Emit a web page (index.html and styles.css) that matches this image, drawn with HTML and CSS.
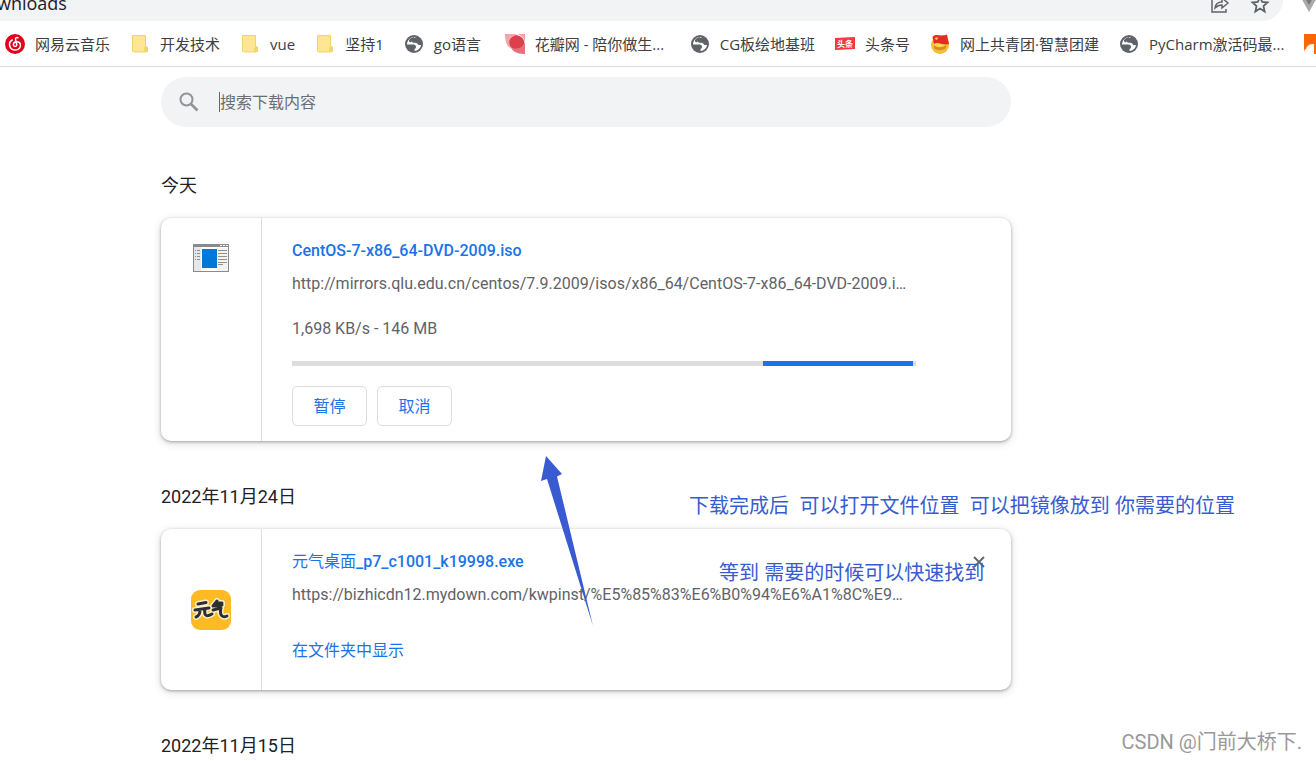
FILE: index.html
```html
<!DOCTYPE html>
<html lang="zh-CN">
<head>
<meta charset="utf-8">
<title>下载内容</title>
<link rel="stylesheet" href="styles.css">
</head>
<body>
<svg class="defs" aria-hidden="true">
  <symbol id="folder" viewBox="0 0 20 20"><path d="M2 1.500h14v11l1.500 1v4.500H3.500L2 17z" fill="#ffe594"/><path d="M2.500 1.500h13V12l2 1v4l-1 1h-13l-1-1z" fill="none" stroke="#f3d46a"/><path d="M14 13.500l1.500-1 2 1V17l-1 1h-2z" fill="#f3d46a"/></symbol>
  <symbol id="globe" viewBox="0 0 20 20"><circle cx="10" cy="10" r="9" fill="#5f6368"/><path d="M13 3.500C9.500 3.500 6.500 5 7.500 7.500c.6 1.500 3 1 5 1.500 1 .3 1.300 1.800 2.300 2H17c-.3 3-3 5.800-6.500 6v-1.500c0-.8 1.500-1 1.500-2.500 0-2-1.500-2.500-3.500-2.500H3C3 6.500 6.500 3 10 3z" fill="#fff"/><path d="M5 6c1-1.500 3-2.700 5-3 .5 1.800-2.500 2-2.500 4.500 0 1.500-3 1-2.500-1.500z" fill="#5f6368"/></symbol>
</svg>
<header class="toolbar">
  <div class="omnibox">
    <span class="address">wnloads</span>
    <div class="tools">
      <button type="button" aria-label="分享"><svg width="20" height="14" viewBox="0 0 20 14"><path d="M2 0v12h14V9M5 8c.5-4 3-6 7-6V-2l6 5-6 5V5C9 5 7 6 5 8z" fill="none" stroke="#5f6368" stroke-width="1.500"/></svg></button>
      <button type="button" aria-label="收藏"><svg width="20" height="14" viewBox="0 0 20 14"><path d="M10-5l2.200 5 5.300.5-4 3.600 1.200 5.400-4.700-2.900-4.700 2.900 1.200-5.400-4-3.600 5.300-.5z" transform="translate(0 2)" fill="none" stroke="#5f6368" stroke-width="1.800"/></svg></button>
    </div>
  </div>
  <svg class="extension" width="16" height="14" viewBox="0 0 16 14"><path d="M0-4h18L9 12z" fill="#aaa"/><path d="M4-4h10L9 5z" fill="#777"/></svg>
</header>
<nav class="bookmarks">
  <a href="#"><svg viewBox="0 0 20 20"><circle cx="10" cy="10" r="10" fill="#e2001a"/><path d="M13 3.800c-1.800-.7-2.800.3-2.400 1.800l1.100 4.800c.5 2.600-3.300 2.800-3.300.2 0-3.300 5.800-4 6.900-.6 1 3.200-1.500 6-5 6-6 0-7.800-7.500-3-10" fill="none" stroke="#fff" stroke-width="1.500" stroke-linecap="round"/></svg><span>网易云音乐</span></a>
  <a href="#"><svg><use href="#folder"/></svg><span>开发技术</span></a>
  <a href="#"><svg><use href="#folder"/></svg><span>vue</span></a>
  <a href="#"><svg><use href="#folder"/></svg><span>坚持1</span></a>
  <a href="#"><svg><use href="#globe"/></svg><span class="label-go">go语言</span></a>
  <a href="#"><svg viewBox="0 0 20 20"><path d="M0 0h12C4 3 3 10 7 15 2 13 0 8 0 0z" fill="#f2a5ab"/><path d="M12 0h8v9C19 3 16 1 12 0z" fill="#f0a0a6"/><path d="M20 8v12C11 20 5 17 5 8c5 9 12 8 15 0z" fill="#e8707b"/><path d="M11 1c6 1 9 5 8 9-2 5-8 6-13 3C2 8 5 3 11 1z" fill="#dd3f4c"/></svg><span class="label-long">花瓣网 - 陪你做生...</span></a>
  <a href="#"><svg><use href="#globe"/></svg><span>CG板绘地基班</span></a>
  <a href="#"><svg viewBox="0 0 20 20"><path d="M0 4l20-1v12L0 16z" fill="#f5373f"/><text x="10" y="13" class="badge-text">头条</text></svg><span>头条号</span></a>
  <a href="#"><svg viewBox="0 0 20 20"><circle cx="10" cy="11" r="9" fill="#f3bd35"/><circle cx="9.500" cy="10" r="6" fill="#f8d94c"/><path d="M2.500 3C6-1 10 3 17 .5L19 10C12 12 8 7 4 10z" fill="#e52b25"/><path d="M4.500 4l3-1 .5 2-2 1z" fill="#f9c62e"/><path d="M4 11c3 3 8 3 12 0v3c-4 3-9 3-12 0z" fill="#d98a22"/></svg><span>网上共青团·智慧团建</span></a>
  <a href="#"><svg><use href="#globe"/></svg><span class="label-long">PyCharm激活码最...</span></a>
  <a href="#" aria-label="书签"><svg viewBox="0 0 20 20"><path d="M0 0h20v20H0z" fill="#f60"/><path d="M0 20c0-3 0-4 2-5 1-4 4-5 8-5v10z" fill="#fff"/></svg></a>
</nav>
<main class="downloads">
  <label class="search">
    <svg width="20" height="20" viewBox="0 0 20 20"><circle cx="7.500" cy="7.500" r="6" fill="none" stroke="#909397" stroke-width="2"/><path d="M12 12l6.500 6.500" stroke="#909397" stroke-width="2.600"/></svg>
    <input type="text" aria-label="搜索下载内容" placeholder="搜索下载内容">
  </label>
  <section>
    <h2>今天</h2>
    <article class="card">
      <div class="icon-cell icon-top">
        <svg width="36" height="28" viewBox="0 0 36 28"><path d="M0 0h36v28H0z" fill="#888c8e"/><path d="M1 3h34v24H1z" fill="#fff"/><path d="M1 3h7v24H1z" fill="#e7e7e7"/><path d="M24 4h11v23H24z" fill="#f3f3f3"/><path d="M9 5h15v19H9z" fill="#0078d7"/><path d="M27 1.500h2m1 0h2m1 0h2" stroke="#fff"/><path d="M2 6.500h1m1 0h3M2 9.500h1m1 0h3M2 12.500h1m1 0h3M2 15.500h1m1 0h3M25 6.500h9m-9 3h9m-9 3h9m-9 3h9m-9 3h9m-9 2h5" stroke="#8b9093"/></svg>
      </div>
      <div class="details">
        <a class="name" href="#">CentOS-7-x86_64-DVD-2009.iso</a>
        <a class="url" href="#">http://mirrors.qlu.edu.cn/centos/7.9.2009/isos/x86_64/CentOS-7-x86_64-DVD-2009.i…</a>
        <p class="status">1,698 KB/s - 146 MB</p>
        <div class="progress" role="progressbar" aria-label="下载进度"><div class="progress-value"></div></div>
        <div class="actions"><button type="button">暂停</button><button type="button">取消</button></div>
      </div>
    </article>
  </section>
  <section>
    <h2>2022年11月24日</h2>
    <article class="card">
      <div class="icon-cell">
        <svg width="40" height="40" viewBox="0 0 40 40"><rect width="40" height="40" rx="9" fill="#fdba25"/><g fill="none" stroke-linecap="round" stroke-linejoin="round"><path d="M7 14l8-1.500M4 20l14-2M9 20c0 4-1 6-4 7M14 19c-1 5 0 9 7 5M26 11l-4 5M25 13h6M24 16l7-1M22 20l8-2c-2 8 2 10 6 8" stroke="#fff0c9" stroke-width="6"/><path d="M7 14l8-1.500M4 20l14-2M9 20c0 4-1 6-4 7M14 19c-1 5 0 9 7 5M26 11l-4 5M25 13h6M24 16l7-1M22 20l8-2c-2 8 2 10 6 8" stroke="#2d3033" stroke-width="3"/></g></svg>
      </div>
      <div class="details">
        <a class="name" href="#"><span class="name-cjk">元气桌面</span>_p7_c1001_k19998.exe</a>
        <a class="url" href="#">https://bizhicdn12.mydown.com/kwpinst/%E5%85%83%E6%B0%94%E6%A1%8C%E9…</a>
        <a class="show" href="#">在文件夹中显示</a>
      </div>
      <button class="close" type="button" aria-label="移除"><svg width="12" height="12" viewBox="0 0 12 12"><path d="M1 1l10 10M11 1L1 11" stroke="#5f6368" stroke-width="1.800"/></svg></button>
    </article>
  </section>
  <section>
    <h2>2022年11月15日</h2>
  </section>
</main>
<svg class="arrow" width="54" height="172" viewBox="0 0 54 172"><path d="M6 0l16 18-5 2.500L53 170 7 23l-6 2z" fill="#385bd2"/></svg>
<p class="note note-first">下载完成后&nbsp; 可以打开文件位置&nbsp; 可以把镜像放到 你需要的位置</p>
<p class="note note-second">等到 需要的时候可以快速找到</p>
<p class="watermark">CSDN @门前大桥下.</p>
</body>
</html>
```
FILE: styles.css
```css
* { box-sizing: border-box; }
html { height: 100%; }
body {
  position: relative;
  height: 100%;
  margin: 0;
  overflow: hidden;
  background: #fff;
  color: #202124;
  font-family: Roboto, "Noto Sans CJK SC", sans-serif;
  font-size: 16px;
}
a { color: #1a73e8; text-decoration: none; }
p, h2 { margin: 0; }
button { font: inherit; cursor: pointer; }
.defs { display: none; }

.toolbar {
  display: flex;
  justify-content: space-between;
  height: 21px;
  overflow: hidden;
}
.omnibox {
  display: flex;
  flex: 1;
  justify-content: space-between;
  margin-right: 17px;
  padding-right: 13px;
  background: #f1f3f4;
  border-radius: 0 0 21px 0;
}
.address {
  height: 21px;
  margin-left: -3px;
  font: 18px/6px "Open Sans", sans-serif;
}
.tools { display: flex; gap: 20px; align-items: flex-start; }
.tools button { padding: 0; border: 0; background: none; }
.tools svg { display: block; }

.bookmarks {
  display: flex;
  gap: 20px;
  height: 46px;
  padding-left: 5px;
  overflow: hidden;
  border-bottom: 1px solid #dadce0;
}
.bookmarks a {
  display: flex;
  flex: none;
  gap: 10px;
  align-items: center;
  color: #3c4043;
  font: 15px/20px "Open Sans", "Noto Sans CJK SC", sans-serif;
  white-space: nowrap;
}
.bookmarks svg { width: 20px; height: 20px; }
.label-go { min-width: 51px; }
.label-long { min-width: 135px; }
.badge-text {
  fill: #fff;
  font: bold 8px "Noto Sans CJK SC", sans-serif;
  text-anchor: middle;
}

.downloads {
  max-width: 1011px;
  padding: 10px 0 0 161px;
}
.search {
  display: flex;
  gap: 20px;
  align-items: center;
  height: 50px;
  margin-bottom: 47px;
  padding: 0 18px;
  background: #f1f3f4;
  border-radius: 25px;
}
.search input {
  flex: 1;
  height: 20px;
  padding: 0;
  border: 0;
  border-left: 1px solid #1a73e8;
  outline: 0;
  background: none;
  font: inherit;
}
.search input::placeholder { color: #6b6e72; opacity: 1; }
h2 {
  margin-bottom: 20px;
  font-size: 18px;
  font-weight: 400;
  line-height: 24px;
}
.card {
  position: relative;
  display: flex;
  margin-bottom: 44px;
  background: #fff;
  border-radius: 10px;
  box-shadow: 0 1px 3px rgba(60, 64, 67, .4), 0 2px 8px rgba(60, 64, 67, .2);
}
.icon-cell {
  display: flex;
  flex: 0 0 101px;
  align-items: center;
  justify-content: center;
  border-right: 1px solid #dadce0;
}
.icon-top { align-items: flex-start; padding-top: 26px; }
.details {
  flex: 1;
  min-width: 0;
  padding: 21px 95px 15px 30px;
}
.name { display: block; font-weight: 500; line-height: 24px; }
.name-cjk { font-weight: 400; }
.url {
  display: block;
  margin-top: 11px;
  color: #5f6368;
  line-height: 20px;
  white-space: nowrap;
}
.status { margin-top: 25px; color: #5f6368; line-height: 20px; }
.progress { height: 5px; margin: 22px 0 20px; background: #ddd; }
.progress-value { width: 24%; height: 100%; margin-left: 75.5%; background: #1a73e8; }
.actions { display: flex; gap: 10px; }
.actions button {
  width: 75px;
  height: 40px;
  padding: 0 0 3px;
  border: 1px solid #dadce0;
  border-radius: 5px;
  background: #fff;
  color: #1a73e8;
}
.show { display: block; margin: 36px 0 14px; line-height: 20px; }
.close {
  position: absolute;
  top: 27px;
  right: 26px;
  padding: 0;
  border: 0;
  background: none;
}
.close svg { display: block; }

.arrow { position: absolute; top: 456px; left: 540px; }
.note {
  position: absolute;
  color: #385bd2;
  font: 20px/24px "Open Sans", "Noto Sans CJK SC", sans-serif;
  white-space: nowrap;
}
.note-first { top: 494px; left: 689px; }
.note-second { top: 561px; left: 719px; }
.watermark {
  position: absolute;
  right: 14px;
  bottom: 7px;
  color: #999;
  font: 20px/24px Roboto, "Noto Sans CJK SC", sans-serif;
}
```
